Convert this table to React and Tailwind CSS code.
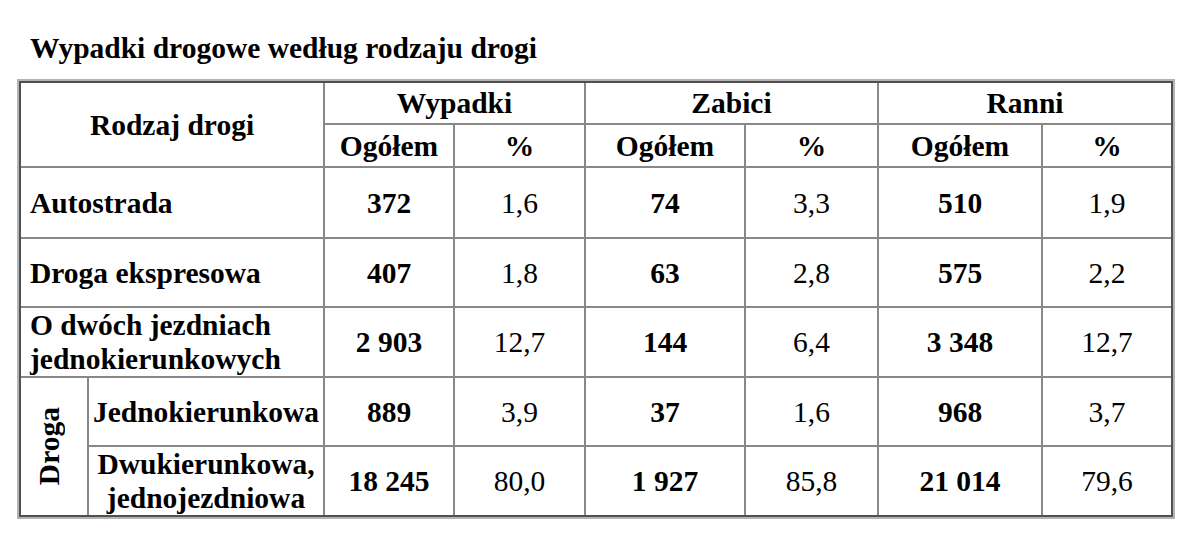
import React from 'react';

const rows = [
  { label: 'Autostrada', w: '372', wp: '1,6', z: '74', zp: '3,3', r: '510', rp: '1,9' },
  { label: 'Droga ekspresowa', w: '407', wp: '1,8', z: '63', zp: '2,8', r: '575', rp: '2,2' },
  { label: ['O dwóch jezdniach', 'jednokierunkowych'], w: '2 903', wp: '12,7', z: '144', zp: '6,4', r: '3 348', rp: '12,7' },
];

const subRows = [
  { label: ['Jednokierunkowa'], w: '889', wp: '3,9', z: '37', zp: '1,6', r: '968', rp: '3,7' },
  { label: ['Dwukierunkowa,', 'jednojezdniowa'], w: '18 245', wp: '80,0', z: '1 927', zp: '85,8', r: '21 014', rp: '79,6' },
];

const cell = 'bg-white flex items-center justify-center text-center';

const Values = ({ row }) => (
  <>
    <div className={`${cell} font-bold`}>{row.w}</div>
    <div className={cell}>{row.wp}</div>
    <div className={`${cell} font-bold`}>{row.z}</div>
    <div className={cell}>{row.zp}</div>
    <div className={`${cell} font-bold`}>{row.r}</div>
    <div className={cell}>{row.rp}</div>
  </>
);

export default function App() {
  return (
    <div className="w-[1200px] h-[556px] bg-white text-black font-[Liberation_Serif,Times_New_Roman,serif]">
      <h1 className="pl-[30px] pt-[32px] text-[29.5px] leading-[33px] font-bold">
        Wypadki drogowe według rodzaju drogi
      </h1>
      <div className="ml-[17px] mt-[14px] w-[1158px] border-2 border-[#b4b4b4]">
        <div className="border-2 border-[#505050] bg-[#888888] grid gap-[2px] grid-cols-[66px_234px_128px_129px_158px_131px_162px_128px] grid-rows-[40px_41px_69px_67px_68px_67px_68px] text-[29.5px] leading-[34px]">
          <div className={`${cell} col-span-2 row-span-2 font-bold`}>Rodzaj drogi</div>
          <div className={`${cell} col-span-2 font-bold`}>Wypadki</div>
          <div className={`${cell} col-span-2 font-bold`}>Zabici</div>
          <div className={`${cell} col-span-2 font-bold`}>Ranni</div>
          <div className={`${cell} font-bold`}>Ogółem</div>
          <div className={`${cell} font-bold`}>%</div>
          <div className={`${cell} font-bold`}>Ogółem</div>
          <div className={`${cell} font-bold`}>%</div>
          <div className={`${cell} font-bold`}>Ogółem</div>
          <div className={`${cell} font-bold`}>%</div>

          {rows.map((row, i) => (
            <React.Fragment key={i}>
              <div className="bg-white col-span-2 flex flex-col justify-center pl-[9px] font-bold">
                {Array.isArray(row.label) ? row.label.map((l) => <span key={l}>{l}</span>) : row.label}
              </div>
              <Values row={row} />
            </React.Fragment>
          ))}

          <div className={`${cell} row-span-2 pr-[10px]`}>
            <span className="font-bold [writing-mode:vertical-rl] rotate-180">Droga</span>
          </div>
          {subRows.map((row, i) => (
            <React.Fragment key={i}>
              <div className={`${cell} flex-col font-bold`}>
                {row.label.map((l) => <span key={l}>{l}</span>)}
              </div>
              <Values row={row} />
            </React.Fragment>
          ))}
        </div>
      </div>
    </div>
  );
}
